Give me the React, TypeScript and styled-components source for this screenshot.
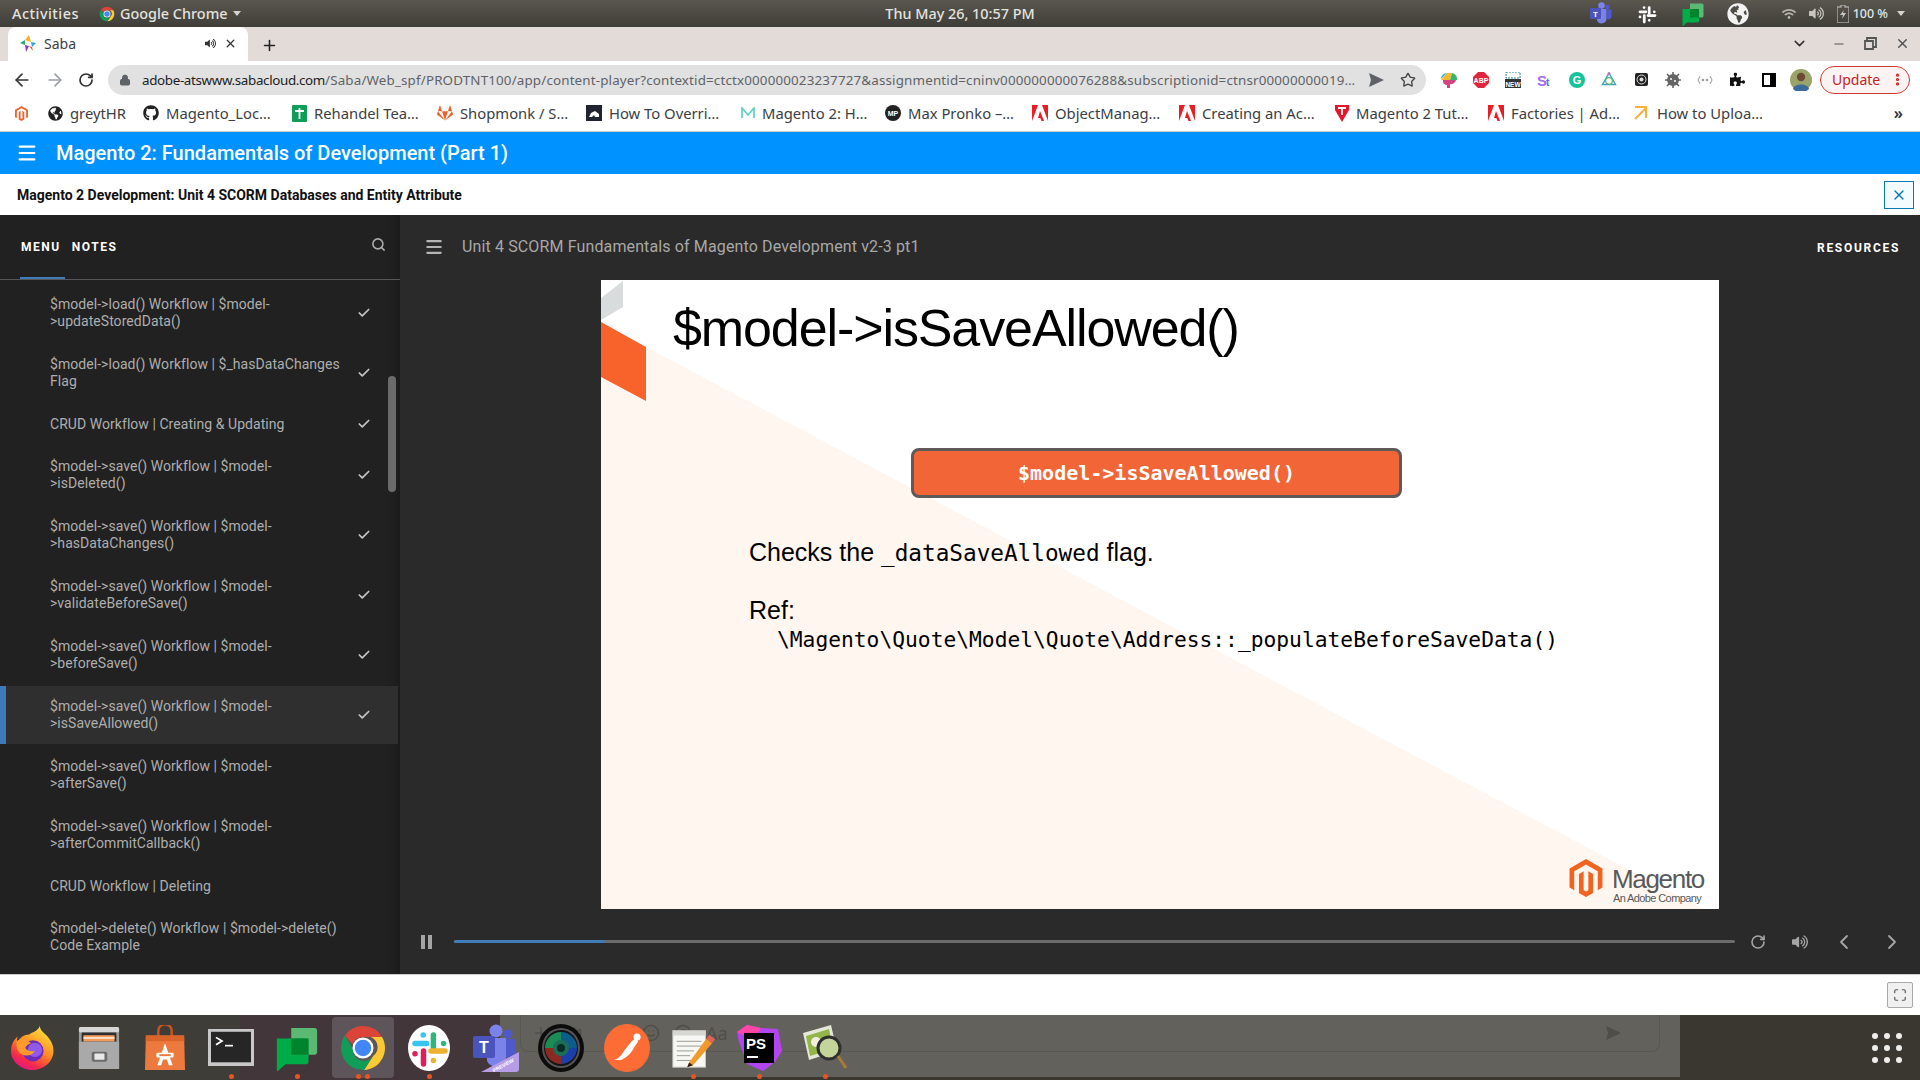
import React from "react";
import styled, { createGlobalStyle } from "styled-components";
import { ArrowLeft, ArrowRight, AtSign, Check, ChevronDown, ChevronLeft, ChevronRight, Lock, Maximize, Menu, Minus, MoreVertical, Plus, RotateCw, Search, Smile, Star, Video, X } from "lucide-react";
import { FaGithub, FaGitlab, FaGlobeAmericas, FaMagento, FaPuzzlePiece, FaVolumeUp, FaWifi } from "react-icons/fa";

const Global = createGlobalStyle`
  html, body { margin: 0; padding: 0; background: #fff; }
  * { box-sizing: border-box; }
`;

const Page = styled.div`
  width: 1920px;
  height: 1080px;
  display: flex;
  flex-direction: column;
  overflow: hidden;
  font-family: "Noto Sans", sans-serif;
`;

/* ubuntu top bar */
const TopBar = styled.div`
  height: 27px;
  display: grid;
  grid-template-columns: 1fr auto 1fr;
  align-items: center;
  padding: 0 12px;
  background: linear-gradient(#5a574f, #3e3d37);
  color: #e4e3df;
  font-size: 14.4px;
  font-weight: 500;
`;
const TopLeft = styled.div`
  display: flex;
  align-items: center;
  gap: 20px;
`;
const Activities = styled.span`
  letter-spacing: 0.5px;
`;
const AppMenu = styled.div`
  display: flex;
  align-items: center;
  gap: 5px;
`;
const Caret = styled.span`
  width: 0;
  height: 0;
  border-left: 4.5px solid transparent;
  border-right: 4.5px solid transparent;
  border-top: 5px solid #d5d4d0;
`;
const Tray = styled.div`
  justify-self: end;
  display: flex;
  align-items: center;
  gap: 13px;
  margin-right: 3px;
`;
const TrayApps = styled.div`
  display: flex;
  align-items: center;
  gap: 22px;
  margin-right: 20px;
`;
const TrayText = styled.span`
  color: #dfe5ea;
  font-size: 12.5px;
  margin: 0 -4px 0 -9px;
`;

/* chrome */
const TabStrip = styled.div`
  height: 34px;
  background: #e3dbd8;
  display: flex;
  align-items: flex-end;
  padding-left: 8px;
`;
const Tab = styled.div`
  width: 240px;
  height: 34px;
  background: #fff;
  border-radius: 8px 8px 0 0;
  display: flex;
  align-items: center;
  padding: 0 11px 1px 12px;
  gap: 8px;
  color: #3c4043;
  font-size: 14px;
`;
const TabTitle = styled.span`
  flex: 1;
`;
const TabPlus = styled.div`
  margin: 0 0 7px 13px;
  color: #222;
  display: flex;
`;
const WindowButtons = styled.div`
  margin: 0 10px 9px auto;
  display: flex;
  align-items: center;
  gap: 18px;
  color: #555;
`;
const StripChevron = styled.span`
  display: flex;
  margin-right: 6px;
`;
const Toolbar = styled.div`
  height: 37px;
  background: #fff;
  display: flex;
  align-items: center;
  padding-left: 12px;
`;
const NavButtons = styled.div`
  display: flex;
  align-items: center;
  gap: 13px;
  width: 96px;
`;
const Omnibox = styled.div`
  width: 1318px;
  height: 30px;
  border-radius: 15px;
  background: #e1e1e1;
  display: flex;
  align-items: center;
  padding: 0 10px 0 11px;
  color: #5f6368;
`;
const LockSlot = styled.span`
  margin-right: 11px;
  display: flex;
`;
const Url = styled.div`
  flex: 1;
  margin: 0 9px 0 0;
  font-size: 13.4px;
  letter-spacing: 0.15px;
  white-space: nowrap;
  overflow: hidden;
  color: #5f6368;
  b {
    font-weight: 400;
    color: #202124;
    letter-spacing: -0.35px;
  }
`;
const OmniIcons = styled.div`
  display: flex;
  align-items: center;
  gap: 16px;
`;
const Extensions = styled.div`
  display: flex;
  align-items: center;
  margin-left: 7px;
`;
const ExtSlot = styled.div`
  width: 32px;
  display: flex;
  justify-content: center;
  align-items: center;
`;
const UpdatePill = styled.div`
  width: 90px;
  height: 28px;
  margin-left: 3px;
  border: 1px solid #d33b33;
  border-radius: 14px;
  background: #fdf3f2;
  display: flex;
  align-items: center;
  padding: 0 4px 0 11px;
  justify-content: space-between;
  color: #c5221f;
  font-size: 14px;
`;
const Bookmarks = styled.div`
  height: 34px;
  background: #fff;
  border-bottom: 1px solid #cfcfcf;
  display: flex;
  align-items: center;
  padding: 0 0 3px 14px;
  color: #3c4043;
  font-size: 14.8px;
`;
const Bookmark = styled.div<{ $w: number }>`
  width: ${(p) => p.$w}px;
  display: flex;
  align-items: center;
  gap: 7px;
  white-space: nowrap;
`;
const MoreBookmarks = styled.div`
  margin-left: auto;
  margin-right: 17px;
  font-size: 16px;
  font-weight: 600;
  color: #333;
`;

/* course page */
const CourseBar = styled.div`
  height: 42px;
  background: #0092ff;
  color: #fff;
  display: flex;
  align-items: center;
  padding-left: 16px;
  gap: 18px;
  font-family: Roboto, sans-serif;
  font-size: 20px;
  font-weight: 500;
`;
const Notice = styled.div`
  height: 41px;
  background: #fff;
  display: flex;
  align-items: center;
  justify-content: space-between;
  padding: 0 6px 0 17px;
  font-family: Roboto, sans-serif;
  font-size: 14px;
  font-weight: 700;
  color: #111;
`;
const NoticeClose = styled.div`
  width: 30px;
  height: 28px;
  border: 1px solid #0b78b4;
  background: #f3fbff;
  color: #0b78b4;
  display: flex;
  align-items: center;
  justify-content: center;
`;
const Player = styled.div`
  height: 759px;
  display: grid;
  grid-template-columns: 400px minmax(0, 1fr);
  font-family: Roboto, sans-serif;
`;
const Sidebar = styled.aside`
  position: relative;
  background: #212121;
  box-shadow: inset -12px 0 10px -10px #191919;
  overflow: hidden;
`;
const SideHead = styled.div`
  height: 65px;
  border-bottom: 1px solid #565656;
  display: flex;
  align-items: flex-start;
  padding: 24px 14px 0 21px;
  color: #fff;
  font-size: 12px;
  font-weight: 700;
  letter-spacing: 1.55px;
`;
const SideTab = styled.span<{ $active?: boolean }>`
  height: 40px;
  padding-top: 1px;
  margin-right: 11px;
  position: relative;
  &::after {
    content: "";
    display: ${(p) => (p.$active ? "block" : "none")};
    position: absolute;
    left: -1px;
    right: -4px;
    bottom: 0;
    height: 2px;
    background: #3f7cb8;
  }
`;
const SearchSlot = styled.span`
  margin: -2px 0 0 auto;
  color: #a9a9a9;
  display: flex;
`;
const Lessons = styled.ul`
  list-style: none;
  margin: 0;
  padding: 4px 0 0;
`;
const Lesson = styled.li<{ $active?: boolean; $single?: boolean }>`
  width: 398px;
  height: ${(p) => (p.$single ? 40 : 58)}px;
  margin: 0 0 2px;
  display: flex;
  align-items: center;
  padding-left: ${(p) => (p.$active ? 44 : 50)}px;
  background: ${(p) => (p.$active ? "#2f2f2f" : "transparent")};
  border-left: ${(p) => (p.$active ? "6px solid #4079b8" : "none")};
  color: #aeaeae;
  font-size: 14px;
  letter-spacing: 0.05px;
  line-height: 17px;
`;
const LessonText = styled.span`
  width: 294px;
`;
const LessonCheck = styled.span`
  margin-left: 13px;
  color: #c4c4c4;
  display: flex;
`;
const Scrollbar = styled.div`
  position: absolute;
  left: 388px;
  top: 161px;
  width: 8px;
  height: 116px;
  border-radius: 4px;
  background: #6b6b6b;
`;
const Stage = styled.main`
  min-width: 0;
  background: #2a2a2a;
  display: flex;
  flex-direction: column;
`;
const StageHead = styled.div`
  height: 65px;
  display: flex;
  align-items: center;
  padding: 0 20px 2px 24px;
  color: #a8a8a8;
  font-size: 16px;
  letter-spacing: 0.13px;
  gap: 18px;
`;
const Resources = styled.span`
  margin-left: auto;
  margin-top: 2px;
  color: #fff;
  font-size: 12px;
  font-weight: 700;
  letter-spacing: 1.7px;
`;
const Slide = styled.section`
  position: relative;
  width: 1118px;
  height: 629px;
  margin-left: 201px;
  display: flex;
  flex-direction: column;
  color: #000;
  font-family: "Liberation Sans", Arial, sans-serif;
  background: linear-gradient(to top right, #fff6f0 50%, #fff 50%) left bottom / 1102px 586px no-repeat, #fff;
`;
const SlideShapes = styled.svg`
  position: absolute;
  left: 0;
  top: 0;
`;
const SlideTitle = styled.h1`
  margin: 0;
  height: 96px;
  padding-left: 72px;
  font-size: 52px;
  font-weight: 400;
  letter-spacing: -1.1px;
  line-height: 96px;
`;
const FnBox = styled.div`
  width: 491px;
  height: 50px;
  margin: 72px 0 0 310px;
  background: #f26536;
  border: 3px solid #5f5a57;
  border-radius: 8px;
  display: flex;
  align-items: center;
  justify-content: center;
  color: #fff;
  font-family: "DejaVu Sans Mono", monospace;
  font-size: 20px;
  font-weight: 700;
`;
const Copy = styled.p`
  margin: 38px 0 0 148px;
  font-size: 25px;
  line-height: 32px;
`;
const RefLine = styled(Copy)`
  margin-top: 25px;
`;
const Code = styled.code`
  font-family: "DejaVu Sans Mono", monospace;
  font-size: 22.7px;
`;
const CodeLine = styled.div`
  margin: 1px 0 0 176px;
  font-family: "DejaVu Sans Mono", monospace;
  font-size: 21.27px;
  line-height: 26px;
`;
const LogoRow = styled.div`
  margin: auto 15px 4px auto;
  display: flex;
  align-items: flex-end;
  gap: 7px;
  color: #58595b;
`;
const LogoIcon = styled.span`
  display: flex;
  margin-bottom: 8px;
`;
const LogoWords = styled.div`
  display: flex;
  flex-direction: column;
`;
const LogoName = styled.span`
  font-size: 26px;
  line-height: 26px;
  letter-spacing: -1.3px;
`;
const LogoSub = styled.span`
  font-size: 11px;
  line-height: 13px;
  letter-spacing: -0.6px;
  margin-left: 1px;
`;
const Controls = styled.div`
  height: 65px;
  display: flex;
  align-items: center;
  padding-left: 21px;
  color: #a5a5a5;
`;
const Pause = styled.span`
  width: 11px;
  height: 14px;
  border-left: 4px solid #a5a5a5;
  border-right: 4px solid #a5a5a5;
  margin-right: 22px;
`;
const Track = styled.div`
  width: 1281px;
  height: 3px;
  background: #6b6b6b;
  border-radius: 2px;
  margin-right: 5px;
`;
const TrackFill = styled.div`
  height: 3px;
  background: #3f7cb8;
  border-radius: 2px;
`;
const ControlSlot = styled.span<{ $w: number }>`
  width: ${(p) => p.$w}px;
  display: flex;
  justify-content: center;
`;
const PageFoot = styled.div`
  height: 41px;
  background: #fff;
  border-top: 1px solid #cdcdcd;
  display: flex;
  align-items: center;
  justify-content: flex-end;
  padding-right: 7px;
`;
const FullscreenBtn = styled.div`
  width: 26px;
  height: 26px;
  background: #f0f0f0;
  border: 1px solid #a9a9a9;
  border-radius: 2px;
  color: #555;
  display: flex;
  align-items: center;
  justify-content: center;
`;

/* ubuntu dock */
const Dock = styled.div`
  position: relative;
  height: 65px;
  flex-shrink: 0;
  padding-top: 2px;
  display: flex;
  background: linear-gradient(to right, #3f3d37 240px, #43363b 240px 500px, #39372f 500px);
`;
const DockShade = styled.div`
  position: absolute;
  left: 500px;
  top: 0;
  width: 1180px;
  height: 62px;
  background: #63615b;
  color: #504e49;
`;
const Composer = styled.div`
  position: absolute;
  left: 20px;
  top: 0;
  width: 1140px;
  height: 37px;
  border: 1px solid #595751;
  border-top: none;
  border-radius: 0 0 8px 8px;
  display: flex;
  align-items: center;
  padding: 0 38px 0 11px;
  font-size: 18px;
  gap: 14px;
`;
const ComposerGap = styled.span`
  width: 32px;
`;
const ComposerSend = styled.span`
  margin-left: auto;
  display: flex;
`;
const DockItem = styled.div<{ $active?: boolean }>`
  position: relative;
  width: 62px;
  height: 61px;
  margin: 0 2px;
  border-radius: 4px;
  display: flex;
  justify-content: center;
  align-items: center;
  background: ${(p) => (p.$active ? "#5d5559" : "transparent")};
`;
const RunDots = styled.div`
  position: absolute;
  left: 0;
  right: 0;
  bottom: -1px;
  display: flex;
  justify-content: center;
  gap: 4px;
`;
const RunDot = styled.span`
  width: 5px;
  height: 5px;
  border-radius: 50%;
  background: #e95420;
`;
const AppGrid = styled.div`
  position: absolute;
  right: 18px;
  top: 18px;
  display: grid;
  grid-template-columns: repeat(3, 6px);
  gap: 6px;
`;
const AppDot = styled.span`
  width: 6px;
  height: 6px;
  border-radius: 50%;
  background: #eeeeec;
`;

const SvgText = styled.text`
  font-family: "Liberation Sans", sans-serif;
  font-weight: 700;
`;

function PlaneIcon({ color }: { color: string }) {
  return (
    <svg width="16" height="14" viewBox="0 0 16 14">
      <path d="M1 0 16 7 1 14l2-7z" fill={color} />
    </svg>
  );
}

function ChromeLogo({ size }: { size: number }) {
  return (
    <svg width={size} height={size} viewBox="0 0 48 48">
      <path d="M24 2a22 22 0 0 1 19.05 11H24a11 11 0 0 0-10.4 7.4L5.900 11.500A22 22 0 0 1 24 2z" fill="#db4437" />
      <path d="M43.050 13A22 22 0 0 1 25 46l9.100-14A11 11 0 0 0 31.800 13z" fill="#fcc934" />
      <path d="M5.900 11.500 14 25a11 11 0 0 0 20.100 7L25 46A22 22 0 0 1 5.900 11.500z" fill="#0f9d58" />
      <circle cx="24" cy="24" r="10.500" fill="#fff" />
      <circle cx="24" cy="24" r="8.200" fill="#4285f4" />
    </svg>
  );
}

function SlackMark({ size, mono }: { size: number; mono?: boolean }) {
  const c = mono ? ["#fff", "#fff", "#fff", "#fff"] : ["#36c5f0", "#2eb67d", "#ecb22e", "#e01e5a"];
  return (
    <svg width={size} height={size} viewBox="0 0 48 48">
      {!mono && <ellipse cx="24" cy="24" rx="21" ry="23" fill="#fff" />}
      <g strokeWidth="5.500" strokeLinecap="round" fill="none">
        <path d="M10 19.600h11.600M18.200 11h.01" stroke={c[0]} />
        <path d="M28.400 11v12M38.600 19.600h.01" stroke={c[1]} />
        <path d="M26 27h14M28.400 36.500h.01" stroke={c[2]} />
        <path d="M18.500 27v13M10 29.800h.01" stroke={c[3]} />
      </g>
    </svg>
  );
}

function HangoutsMark({ size }: { size: number }) {
  return (
    <svg width={size} height={size} viewBox="0 0 48 48">
      <path d="M18 3h24a3 3 0 0 1 3 3v22a3 3 0 0 1-3 3H18z" fill="#5bb974" />
      <path d="M3 14h30a3 3 0 0 1 3 3v21a3 3 0 0 1-3 3H12l-9 8z" fill="#00ac47" />
      <path d="M18 14h18v17H18z" fill="#00832d" />
    </svg>
  );
}

function TeamsMark({ size, preview }: { size: number; preview?: boolean }) {
  return (
    <svg width={size} height={size} viewBox="0 0 48 48">
      <circle cx="25" cy="7" r="6.500" fill="#7b83eb" />
      <circle cx="37" cy="10" r="4.500" fill="#5059c9" />
      <path d="M16 14h19v20a10 10 0 0 1-19 3z" fill="#7b83eb" />
      <path d="M35 15h10v13a6 6 0 0 1-10 5z" fill="#5059c9" />
      <rect x="2" y="12" width="22" height="22" rx="2" fill="#4b53bc" />
      <SvgText x="13" y="29" fontSize="16" fill="#fff" textAnchor="middle">T</SvgText>
      {preview && (
        <>
          <path d="M10 48 48 28v17a3 3 0 0 1-3 3z" fill="#b79ce6" />
          <SvgText x="33" y="43" fontSize="5" fill="#fff" textAnchor="middle" transform="rotate(-28 33 43)">PREVIEW</SvgText>
        </>
      )}
    </svg>
  );
}

const Firefox = () => (
  <svg width="46" height="48" viewBox="0 0 48 48">
    <defs>
      <linearGradient id="ffa" x1="0.8" y1="0.1" x2="0.3" y2="1">
        <stop offset="0" stopColor="#ffdd3c" />
        <stop offset="0.45" stopColor="#ff8a22" />
        <stop offset="0.8" stopColor="#f5294b" />
        <stop offset="1" stopColor="#e31587" />
      </linearGradient>
    </defs>
    <path d="M31 1c1 6 5 7 9 12 5 6 7 14 4 21-3 8-12 13-20 13C12 47 1 38 1 27c0-6 3-12 7-15-1 3-1 5 0 6 2-5 7-8 12-8 3-3 9-3 11-9z" fill="url(#ffa)" />
    <circle cx="24" cy="27" r="11" fill="#6b2cb8" />
    <circle cx="26" cy="26" r="7.500" fill="#8f5ae8" />
    <path d="M7 17c5-4 10-3 15 2-4 1-5 3-6 5 2 3 6 4 10 3-3 5-11 7-16 2-3-3-4-8-3-12z" fill="#ff9a2c" />
  </svg>
);

const FileCabinet = () => (
  <svg width="42" height="44" viewBox="0 0 46 48">
    <rect x="1" y="1" width="44" height="46" rx="2" fill="#9a9a9a" />
    <rect x="1" y="1" width="44" height="6" rx="2" fill="#d6d6d6" />
    <rect x="4" y="7" width="38" height="14" fill="#2f2f2f" />
    <rect x="6" y="10" width="34" height="7" fill="#f39a5c" />
    <rect x="6" y="12" width="34" height="2" fill="#f8e3cf" />
    <rect x="1" y="17" width="44" height="30" fill="#a9a9a9" />
    <rect x="15" y="28" width="17" height="11" rx="2" fill="#6b6b6b" />
    <rect x="18" y="30" width="11" height="7" rx="1" fill="#e8e8e8" />
  </svg>
);

const SoftwareBag = () => (
  <svg width="42" height="46" viewBox="0 0 44 48">
    <path d="M15 12V6a7 7 0 0 1 14 0v6" fill="none" stroke="#c9541f" strokeWidth="2.600" />
    <path d="M2 11h40l1 36H1z" fill="#ec7a3e" />
    <path d="M2 11h40l.3 6H1.700z" fill="#d9652b" />
    <path d="M22 19 14 42h4l2-6h4l2 6h4z" fill="#fff" />
    <rect x="13" y="29" width="18" height="5" rx="1" fill="#fff" />
    <rect x="16" y="30.500" width="12" height="2" fill="#ec7a3e" />
  </svg>
);

const TerminalApp = () => (
  <svg width="46" height="37" viewBox="0 0 46 40" preserveAspectRatio="none">
    <rect width="46" height="40" fill="#c8c8c8" />
    <rect x="3" y="3" width="40" height="33" fill="#262626" />
    <path d="M8 9l6 4-6 4" fill="none" stroke="#fff" strokeWidth="1.800" />
    <path d="M17 18h8" stroke="#fff" strokeWidth="1.800" />
  </svg>
);

const Lens = () => (
  <svg width="46" height="48" viewBox="0 0 46 48">
    <ellipse cx="23" cy="24" rx="23" ry="24" fill="#0c0c0c" />
    <ellipse cx="23" cy="24" rx="19" ry="20" fill="#555" />
    <ellipse cx="23" cy="24" rx="17" ry="18" fill="#141414" />
    <path d="M23 8a16 16 0 0 1 16 16H23z" fill="#0e5c8c" />
    <path d="M39 24a16 16 0 0 1-16 16V24z" fill="#1a3fa8" />
    <path d="M23 40A16 16 0 0 1 7 24h16z" fill="#8c2a22" />
    <path d="M7 24A16 16 0 0 1 23 8v16z" fill="#1b8c54" />
    <circle cx="23" cy="24" r="8" fill="#1d6e59" />
    <circle cx="23" cy="24" r="4" fill="#0b2a26" />
  </svg>
);

const Postman = () => (
  <svg width="46" height="48" viewBox="0 0 46 48">
    <ellipse cx="23" cy="24" rx="23" ry="24" fill="#fd6c35" />
    <path d="M10 36c4-1 7-4 10-9l7-9c2-3 6-4 7-1 0 2-2 3-3 5-3 6-7 11-14 14z" fill="#fff" />
    <circle cx="33" cy="13" r="3.600" fill="#fff" />
  </svg>
);

const Gedit = () => (
  <svg width="46" height="46" viewBox="0 0 48 48">
    <rect x="3" y="6" width="34" height="38" fill="#f7f7f4" stroke="#c9c9c4" />
    <path d="M3 6h34v5H3z" fill="#d8d8d2" />
    <path d="M7 17h26M7 22h26M7 27h18M7 32h14M7 37h20" stroke="#9a9a94" strokeWidth="1" />
    <path d="M20 39 38 14l6 5-20 23-6 2z" fill="#f19a2b" />
    <path d="M38 14l3-4 6 5-3 4z" fill="#e0605a" />
    <path d="M20 39l-2 5 6-2z" fill="#222" />
  </svg>
);

const PhpStorm = () => (
  <svg width="48" height="48" viewBox="0 0 48 48">
    <path d="M2 8 12 1l14 3 17 1 4 22-7 11-12 9-16-7L4 18z" fill="#b345f1" />
    <path d="M2 8 12 1l14 3-8 12z" fill="#ff45a5" />
    <rect x="9" y="9" width="30" height="30" fill="#000" />
    <SvgText x="11" y="25" fontSize="15" fill="#fff">PS</SvgText>
    <rect x="12" y="32" width="11" height="2" fill="#fff" />
  </svg>
);

const ImageViewer = () => (
  <svg width="46" height="48" viewBox="0 0 46 48">
    <path d="M1 9 29 1l6 26-28 9z" fill="#e5e8d8" />
    <path d="M4 12 27 5l4 20-23 7z" fill="#93b648" />
    <circle cx="14" cy="18" r="5" fill="#f2eedd" />
    <circle cx="27" cy="24" r="11" fill="#c5d49b" stroke="#2f2f2f" strokeWidth="3" />
    <path d="M36 32l8 12" stroke="#a67a38" strokeWidth="3" />
  </svg>
);

const TabFavicon = () => (
  <svg width="16" height="18" viewBox="0 0 16 18">
    <path d="M9 0 11 7 5 5z" fill="#f2b12d" />
    <path d="M11 7 16 8 12 12z" fill="#2da7d9" />
    <path d="M5 5 0 8 5 10z" fill="#33a86f" />
    <path d="M5 10 6 17 9 11z" fill="#8a3ea8" />
    <path d="M9 11 13 16 12 12z" fill="#e0572e" />
  </svg>
);

const Abp = () => (
  <svg width="16" height="16" viewBox="0 0 16 16">
    <path d="M5 0h6l5 5v6l-5 5H5l-5-5V5z" fill="#e0263c" />
    <SvgText x="8" y="11" fontSize="7" fill="#fff" textAnchor="middle">ABP</SvgText>
  </svg>
);
const BrainExt = () => (
  <svg width="18" height="16" viewBox="0 0 18 16">
    <path d="M1 7a6 6 0 0 1 6-6z" fill="#3ba7e0" />
    <path d="M7 1h5l-2 7H1z" fill="#f0b92e" />
    <path d="M12 1a6 6 0 0 1 5 7h-7z" fill="#3bb273" />
    <path d="M3 8h13a5 5 0 0 1-6 4v4H7v-3a4 4 0 0 1-4-5z" fill="#d2457f" />
  </svg>
);
const NewsExt = () => (
  <svg width="16" height="16" viewBox="0 0 16 16">
    <rect x="1" y="0" width="14" height="6" fill="none" stroke="#1f8a9c" strokeDasharray="2 1" />
    <rect y="7" width="16" height="9" fill="#333" />
    <SvgText x="8" y="14.500" fontSize="6.500" fill="#fff" textAnchor="middle">NEW</SvgText>
  </svg>
);
const StExt = () => (
  <svg width="16" height="16" viewBox="0 0 16 16">
    <SvgText x="0" y="14" fontSize="15" fill="#a66bef">S</SvgText>
    <SvgText x="9" y="14" fontSize="10" fill="#5a6be0">t</SvgText>
  </svg>
);
const GrammarlyExt = () => (
  <svg width="16" height="16" viewBox="0 0 16 16">
    <circle cx="8" cy="8" r="8" fill="#15c39a" />
    <SvgText x="8" y="12" fontSize="11" fill="#fff" textAnchor="middle">G</SvgText>
  </svg>
);
const GraphExt = () => (
  <svg width="16" height="16" viewBox="0 0 16 16">
    <path d="M8 1l6.500 11.500h-13z" fill="none" stroke="#3aa0c9" strokeWidth="1.400" />
    <circle cx="8" cy="9" r="3.400" fill="none" stroke="#5fb56a" strokeWidth="1.200" />
    <circle cx="8" cy="1.600" r="1.400" fill="#d06ab2" />
  </svg>
);
const CameraExt = () => (
  <svg width="13" height="13" viewBox="0 0 13 13">
    <rect width="13" height="13" rx="2" fill="#222" />
    <circle cx="6.500" cy="6.500" r="4.500" fill="none" stroke="#ddd" />
    <circle cx="6.500" cy="6.500" r="2" fill="#ddd" />
  </svg>
);
const BugExt = () => (
  <svg width="16" height="16" viewBox="0 0 16 16">
    <circle cx="8" cy="8" r="6" fill="#666" />
    <path d="M8 0v16M0 8h16M2 2l12 12M14 2 2 14" stroke="#666" strokeWidth="1.600" />
    <circle cx="6" cy="7" r="1" fill="#fff" />
    <circle cx="10" cy="9" r="1" fill="#fff" />
  </svg>
);
const SidePanelIcon = () => (
  <svg width="14" height="14" viewBox="0 0 14 14">
    <rect x="1" y="1" width="12" height="12" fill="none" stroke="#000" strokeWidth="2" />
    <rect x="8" y="1" width="5" height="12" fill="#000" />
  </svg>
);
const Avatar = () => (
  <svg width="22" height="22" viewBox="0 0 22 22">
    <circle cx="11" cy="11" r="11" fill="#9aa46a" />
    <circle cx="11" cy="8" r="4.200" fill="#6e4a36" />
    <path d="M3 20c1-6 15-6 16 0a11 11 0 0 1-16 0z" fill="#3d6a9c" />
  </svg>
);
const Battery = () => (
  <svg width="12" height="18" viewBox="0 0 12 18">
    <path d="M4 0h4v2h4v16H0V2h4z" fill="none" stroke="#a5a49f" strokeWidth="1.500" />
    <path d="M7 5 3 10h3l-1 4 4-6H6z" fill="#c9c8c3" />
  </svg>
);
const HtmlMark = () => (
  <svg width="16" height="10" viewBox="0 0 16 10">
    <path d="M3 1 1 5l2 4M13 1l2 4-2 4" fill="none" stroke="#9a9a9a" />
    <circle cx="6" cy="5" r="1.300" fill="#9a9a9a" />
    <circle cx="10" cy="5" r="1.300" fill="#9a9a9a" />
  </svg>
);
const RehandelIcon = () => (
  <svg width="15" height="17" viewBox="0 0 15 17">
    <rect width="15" height="17" rx="1" fill="#0f9d58" />
    <path d="M3 6h9M7.500 3v11" stroke="#fff" strokeWidth="1.800" />
  </svg>
);
const BlackHouse = () => (
  <svg width="16" height="16" viewBox="0 0 16 16">
    <rect width="16" height="16" fill="#1f2430" />
    <path d="M3 12l2-4 4-2 4 3v3H9l-1-2-2 2z" fill="#fff" />
  </svg>
);
const TealMark = () => (
  <svg width="14" height="12" viewBox="0 0 14 12">
    <path d="M1 11V1l6 7 6-7v10" fill="none" stroke="#5fd0c5" strokeWidth="1.700" />
  </svg>
);
const ProfileMark = () => (
  <svg width="16" height="16" viewBox="0 0 16 16">
    <circle cx="8" cy="8" r="8" fill="#222" />
    <SvgText x="8" y="11" fontSize="7" fill="#fff" textAnchor="middle">MP</SvgText>
  </svg>
);
const RedT = () => (
  <svg width="14" height="17" viewBox="0 0 14 17">
    <path d="M0 0h14v5l-7 12L0 5z" fill="#e4172b" />
    <path d="M3 3h8M7 3v7" stroke="#fff" strokeWidth="1.800" />
  </svg>
);
const ArrowMark = () => (
  <svg width="16" height="14" viewBox="0 0 16 14">
    <path d="M1 1h11v11M1 13 12 2" fill="none" stroke="#fbb03b" strokeWidth="2" />
  </svg>
);
const AdobeMark = () => (
  <svg width="16" height="16" viewBox="0 0 16 16">
    <path d="M0 0h6L0 16zM10 0h6v16zM8 6l4 10H9.500L8.300 13H6z" fill="#ec1c24" />
  </svg>
);

const bookmarks = [
  { w: 34, icon: <FaMagento size={15} color="#ee672f" />, label: "" },
  { w: 95, icon: <FaGlobeAmericas size={15} color="#222" />, label: "greytHR" },
  { w: 149, icon: <FaGithub size={16} color="#222" />, label: "Magento_Loc…" },
  { w: 145, icon: <RehandelIcon />, label: "Rehandel Tea…" },
  { w: 149, icon: <FaGitlab size={16} color="#e8622a" />, label: "Shopmonk / S…" },
  { w: 155, icon: <BlackHouse />, label: "How To Overri…" },
  { w: 144, icon: <TealMark />, label: "Magento 2: H…" },
  { w: 147, icon: <ProfileMark />, label: "Max Pronko –…" },
  { w: 147, icon: <AdobeMark />, label: "ObjectManag…" },
  { w: 156, icon: <AdobeMark />, label: "Creating an Ac…" },
  { w: 153, icon: <RedT />, label: "Magento 2 Tut…" },
  { w: 146, icon: <AdobeMark />, label: "Factories | Ad…" },
  { w: 150, icon: <ArrowMark />, label: "How to Uploa…" },
];

const extensions = [<BrainExt />, <Abp />, <NewsExt />, <StExt />, <GrammarlyExt />, <GraphExt />, <CameraExt />, <BugExt />, <HtmlMark />, <FaPuzzlePiece size={15} color="#111" />, <SidePanelIcon />, <Avatar />];

const lessons = [
  { text: "$model->load() Workflow | $model->updateStoredData()", done: true },
  { text: "$model->load() Workflow | $_hasDataChanges Flag", done: true },
  { text: "CRUD Workflow | Creating & Updating", done: true, single: true },
  { text: "$model->save() Workflow | $model->isDeleted()", done: true },
  { text: "$model->save() Workflow | $model->hasDataChanges()", done: true },
  { text: "$model->save() Workflow | $model->validateBeforeSave()", done: true },
  { text: "$model->save() Workflow | $model->beforeSave()", done: true },
  { text: "$model->save() Workflow | $model->isSaveAllowed()", done: true, active: true },
  { text: "$model->save() Workflow | $model->afterSave()" },
  { text: "$model->save() Workflow | $model->afterCommitCallback()" },
  { text: "CRUD Workflow | Deleting", single: true },
  { text: "$model->delete() Workflow | $model->delete() Code Example" },
];

const dock = [
  { icon: <Firefox />, dots: 0 },
  { icon: <FileCabinet />, dots: 0 },
  { icon: <SoftwareBag />, dots: 0 },
  { icon: <TerminalApp />, dots: 1 },
  { icon: <HangoutsMark size={46} />, dots: 1 },
  { icon: <ChromeLogo size={48} />, dots: 2, active: true },
  { icon: <SlackMark size={48} />, dots: 1 },
  { icon: <TeamsMark size={48} preview />, dots: 0 },
  { icon: <Lens />, dots: 0 },
  { icon: <Postman />, dots: 0 },
  { icon: <Gedit />, dots: 1 },
  { icon: <PhpStorm />, dots: 1 },
  { icon: <ImageViewer />, dots: 1 },
];

export default function App() {
  return (
    <Page>
      <Global />
      <TopBar>
        <TopLeft>
          <Activities>Activities</Activities>
          <AppMenu>
            <ChromeLogo size={16} />
            <span>Google Chrome</span>
            <Caret />
          </AppMenu>
        </TopLeft>
        <span>Thu May 26, 10:57 PM</span>
        <Tray>
          <TrayApps>
            <TeamsMark size={24} />
            <SlackMark size={24} mono />
            <HangoutsMark size={24} />
            <FaGlobeAmericas size={22} color="#f2f2f2" />
          </TrayApps>
          <FaWifi size={14} color="#b5b4af" />
          <FaVolumeUp size={15} color="#c5c4bf" />
          <Battery />
          <TrayText>100 %</TrayText>
          <Caret />
        </Tray>
      </TopBar>

      <TabStrip>
        <Tab>
          <TabFavicon />
          <TabTitle>Saba</TabTitle>
          <FaVolumeUp size={11} color="#333" />
          <X size={13} color="#333" strokeWidth={2.4} />
        </Tab>
        <TabPlus>
          <Plus size={17} strokeWidth={2.2} />
        </TabPlus>
        <WindowButtons>
          <StripChevron>
            <ChevronDown size={17} color="#333" strokeWidth={2.2} />
          </StripChevron>
          <Minus size={14} />
          <svg width="13" height="13" viewBox="0 0 13 13">
            <path d="M3 1h9v9H9V4H3zM1 4h8v8H1z" fill="none" stroke="#555" strokeWidth="1.800" />
          </svg>
          <X size={15} strokeWidth={2.4} />
        </WindowButtons>
      </TabStrip>

      <Toolbar>
        <NavButtons>
          <ArrowLeft size={20} color="#333" />
          <ArrowRight size={20} color="#9aa0a6" />
          <RotateCw size={16} color="#333" strokeWidth={2.6} />
        </NavButtons>
        <Omnibox>
          <LockSlot>
            <Lock size={12} color="#5f6368" fill="#5f6368" />
          </LockSlot>
          <Url>
            <b>adobe-atswww.sabacloud.com</b>/Saba/Web_spf/PRODTNT100/app/content-player?contextid=ctctx000000023237727&amp;assignmentid=cninv000000000076288&amp;subscriptionid=ctnsr00000000019…
          </Url>
          <OmniIcons>
            <PlaneIcon color="#5f6368" />
            <Star size={16} color="#444" />
          </OmniIcons>
        </Omnibox>
        <Extensions>
          {extensions.map((ext, i) => (
            <ExtSlot key={i}>{ext}</ExtSlot>
          ))}
        </Extensions>
        <UpdatePill>
          <span>Update</span>
          <MoreVertical size={15} color="#c5221f" strokeWidth={3} />
        </UpdatePill>
      </Toolbar>

      <Bookmarks>
        {bookmarks.map((b, i) => (
          <Bookmark key={i} $w={b.w}>
            {b.icon}
            {b.label && <span>{b.label}</span>}
          </Bookmark>
        ))}
        <MoreBookmarks>»</MoreBookmarks>
      </Bookmarks>

      <CourseBar>
        <Menu size={22} strokeWidth={2.4} />
        <span>Magento 2: Fundamentals of Development (Part 1)</span>
      </CourseBar>
      <Notice>
        <span>Magento 2 Development: Unit 4 SCORM Databases and Entity Attribute</span>
        <NoticeClose>
          <X size={16} strokeWidth={2} />
        </NoticeClose>
      </Notice>

      <Player>
        <Sidebar>
          <SideHead>
            <SideTab $active>MENU</SideTab>
            <SideTab>NOTES</SideTab>
            <SearchSlot>
              <Search size={15} strokeWidth={2.6} />
            </SearchSlot>
          </SideHead>
          <Lessons>
            {lessons.map((l) => (
              <Lesson key={l.text} $active={l.active} $single={l.single}>
                <LessonText>{l.text}</LessonText>
                {l.done && (
                  <LessonCheck>
                    <Check size={14} strokeWidth={3} />
                  </LessonCheck>
                )}
              </Lesson>
            ))}
          </Lessons>
          <Scrollbar />
        </Sidebar>
        <Stage>
          <StageHead>
            <Menu size={20} strokeWidth={2.6} color="#b5b5b5" />
            <span>Unit 4 SCORM Fundamentals of Magento Development v2-3 pt1</span>
            <Resources>RESOURCES</Resources>
          </StageHead>
          <Slide>
            <SlideShapes width="50" height="125" viewBox="0 0 50 125">
              <path d="M0 18 22 1v26L0 40z" fill="#d9dcdd" />
              <path d="M0 42 45 67v54L0 97z" fill="#f8622b" />
            </SlideShapes>
            <SlideTitle>$model-&gt;isSaveAllowed()</SlideTitle>
            <FnBox>$model-&gt;isSaveAllowed()</FnBox>
            <Copy>
              Checks the <Code>_dataSaveAllowed</Code> flag.
            </Copy>
            <RefLine>Ref:</RefLine>
            <CodeLine>\Magento\Quote\Model\Quote\Address::_populateBeforeSaveData()</CodeLine>
            <LogoRow>
              <LogoIcon>
                <FaMagento size={38} color="#f26322" />
              </LogoIcon>
              <LogoWords>
                <LogoName>Magento</LogoName>
                <LogoSub>An Adobe Company</LogoSub>
              </LogoWords>
            </LogoRow>
          </Slide>
          <Controls>
            <Pause />
            <Track>
              <TrackFill style={{ width: `${(151 / 1281) * 100}%` }} />
            </Track>
            <ControlSlot $w={36}>
              <RotateCw size={16} strokeWidth={2.4} />
            </ControlSlot>
            <ControlSlot $w={48}>
              <FaVolumeUp size={16} />
            </ControlSlot>
            <ControlSlot $w={40}>
              <ChevronLeft size={24} strokeWidth={1.8} />
            </ControlSlot>
            <ControlSlot $w={56}>
              <ChevronRight size={24} strokeWidth={1.8} />
            </ControlSlot>
          </Controls>
        </Stage>
      </Player>

      <PageFoot>
        <FullscreenBtn>
          <Maximize size={14} strokeWidth={2} />
        </FullscreenBtn>
      </PageFoot>

      <Dock>
        <DockShade>
          <Composer>
            <Plus size={18} />
            <Video size={18} />
            <ComposerGap />
            <Smile size={18} />
            <AtSign size={18} />
            <span>Aa</span>
            <ComposerSend>
              <PlaneIcon color="#504e49" />
            </ComposerSend>
          </Composer>
        </DockShade>
        {dock.map((d, i) => (
          <DockItem key={i} $active={d.active}>
            {d.icon}
            <RunDots>
              {Array.from({ length: d.dots }, (_, k) => (
                <RunDot key={k} />
              ))}
            </RunDots>
          </DockItem>
        ))}
        <AppGrid>
          {Array.from({ length: 9 }, (_, i) => (
            <AppDot key={i} />
          ))}
        </AppGrid>
      </Dock>
    </Page>
  );
}
